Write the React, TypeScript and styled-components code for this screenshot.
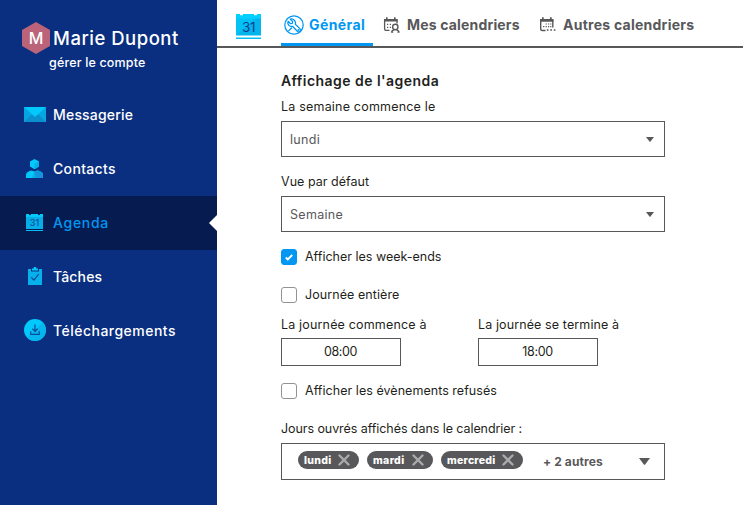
import React, { useState } from 'react';
import styled, { createGlobalStyle } from 'styled-components';

const GlobalStyle = createGlobalStyle`
  * { box-sizing: border-box; }
  body { margin: 0; background: #fff; font-family: Inter, "Noto Sans", sans-serif; color: #1f1f21; }
`;

const Layout = styled.div`
  display: flex;
  height: 505px;
  overflow: hidden;
`;

/* Sidebar */
const Sidebar = styled.aside`
  width: 217px;
  flex: none;
  background: #0a2f80;
  color: #fff;
`;

const Account = styled.header`
  height: 88px;
  padding: 22px 0 0 22px;
`;

const AccountRow = styled.div`
  display: flex;
  align-items: flex-start;
  height: 33px;
`;

const AccountName = styled.div`
  margin-left: 3px;
  font-size: 18.5px;
  font-weight: 450;
  line-height: 33px;
  letter-spacing: 0.5px;
  white-space: nowrap;
`;

const ManageLink = styled.a`
  display: block;
  margin: -2px 0 0 27px;
  font-size: 12.5px;
  font-weight: 500;
  line-height: 20px;
  letter-spacing: 0.16px;
`;

const NavItem = styled.a<{ $active?: boolean; $spacing: number }>`
  position: relative;
  display: flex;
  align-items: center;
  height: 54px;
  padding: 0 0 2px 24px;
  font-size: 14px;
  font-weight: 500;
  letter-spacing: ${p => p.$spacing}px;
  color: ${p => (p.$active ? '#0097f2' : '#fff')};
  background: ${p => (p.$active ? '#061c51' : 'transparent')};
  &::after {
    content: '';
    display: ${p => (p.$active ? 'block' : 'none')};
    position: absolute;
    right: 0;
    top: 19px;
    border: 8px solid transparent;
    border-right-color: #fff;
    border-left: 0;
  }
`;

const NavIcon = styled.span`
  display: flex;
  justify-content: center;
  width: 22px;
  margin-right: 7px;
  svg { display: block; }
`;

/* Main area */
const Main = styled.main`
  flex: 1;
`;

const TabBar = styled.nav`
  display: flex;
  height: 48px;
  padding-left: 18px;
  border-bottom: 2px solid #58585a;
`;

const AppIcon = styled.div`
  width: 46px;
  padding: 14px 0 0 1px;
  svg { display: block; }
`;

const Tab = styled.a<{ $active?: boolean; $spacing: number; $gap: number; $width: number }>`
  display: flex;
  align-items: center;
  gap: ${p => p.$gap}px;
  width: ${p => p.$width}px;
  height: 46px;
  padding: 6px 0 0 3px;
  border-bottom: 3px solid ${p => (p.$active ? '#0097f2' : 'transparent')};
  color: ${p => (p.$active ? '#0097f2' : '#58585a')};
  font-size: 14px;
  font-weight: 700;
  line-height: 20px;
  letter-spacing: ${p => p.$spacing}px;
  white-space: nowrap;
  svg { flex: none; }
`;

const TabIcon = styled.span`
  display: flex;
  margin-left: 7px;
  padding-top: 1px;
`;

const Form = styled.form`
  display: flex;
  flex-direction: column;
  width: 448px;
  padding: 23px 0 0 64px;
`;

const Title = styled.h1`
  margin: 0 0 5px;
  font-size: 14px;
  font-weight: 600;
  line-height: 20px;
  letter-spacing: 0.45px;
`;

const Label = styled.div<{ $spacing: number }>`
  height: 25px;
  font-size: 12.5px;
  line-height: 21px;
  letter-spacing: ${p => p.$spacing}px;
  white-space: nowrap;
`;

const Select = styled.div<{ $spacing: number }>`
  display: flex;
  align-items: center;
  justify-content: space-between;
  height: 36px;
  margin-bottom: 14px;
  padding: 0 10px 0 8px;
  border: 1px solid #58585a;
  color: #58585a;
  font-size: 12.5px;
  letter-spacing: ${p => p.$spacing}px;
`;

const CheckRow = styled.label<{ $mt: number; $mb: number; $spacing: number }>`
  display: flex;
  align-items: center;
  gap: 8px;
  height: 16px;
  margin: ${p => p.$mt}px 0 ${p => p.$mb}px;
  font-size: 12.5px;
  line-height: 16px;
  letter-spacing: ${p => p.$spacing}px;
`;

const Box = styled.span<{ $checked: boolean }>`
  display: flex;
  align-items: center;
  justify-content: center;
  width: 16px;
  height: 16px;
  border: 1px solid ${p => (p.$checked ? '#0097f2' : '#929293')};
  border-radius: 3px;
  background: ${p => (p.$checked ? '#0097f2' : '#fff')};
`;

const Times = styled.div`
  display: grid;
  grid-template-columns: 197px 1fr;
`;

const TimeLabel = styled(Label)`
  height: 24px;
`;

const TimeField = styled.div`
  width: 120px;
  height: 28px;
  padding-right: 1px;
  border: 1px solid #58585a;
  font-size: 12.5px;
  line-height: 26px;
  letter-spacing: -0.36px;
  text-align: center;
`;

const DaysField = styled.div`
  display: flex;
  align-items: center;
  height: 37px;
  padding: 0 14px 0 16px;
  border: 1px solid #58585a;
  color: #58585a;
`;

const Chip = styled.span<{ $width: number; $spacing: number }>`
  display: flex;
  align-items: center;
  justify-content: space-between;
  width: ${p => p.$width}px;
  height: 18px;
  margin: 0 8px 3px 0;
  padding: 0 9px 0 6px;
  border-radius: 9px;
  background: #58585a;
  color: #fff;
  font-size: 10.5px;
  font-weight: 800;
  letter-spacing: ${p => p.$spacing}px;
`;

const More = styled.span`
  flex: 1;
  margin-left: 12px;
  font-size: 12px;
  font-weight: 700;
  letter-spacing: 0.11px;
`;

const Hexagon = () => (
  <svg width="28" height="32" viewBox="0 0 28 32">
    <path d="M14 0 28 8v16l-14 8L0 24V8z" fill="#bb6379" />
    <text x="14" y="22" textAnchor="middle" fontFamily="Inter, sans-serif" fontSize="16" fontWeight="500" fill="#fff">M</text>
  </svg>
);

const MailIcon = () => (
  <svg width="22" height="15" viewBox="0 0 22 15">
    <path d="M0 0h22v15H0z" fill="#04a7e2" />
    <path d="M0 15 7.5 7.5h7L22 15z" fill="#0c8fce" />
    <path d="M0 0h22L11 10z" fill="#02c8fb" />
  </svg>
);

const ContactIcon = () => (
  <svg width="18" height="19" viewBox="0 0 18 19">
    <path d="m8.500 0 4.500 2.600v5L8.500 10.300 4 7.600v-5z" fill="#02c8fb" />
    <path d="M8.500 5 13 2.600v5L8.500 10.300z" fill="#06aee8" />
    <path d="M0 19v-2.600C0 13.200 3 12 5.500 11.500l3 1 3-1C14 12 17 13.200 17 16.400V19z" fill="#02c8fb" />
    <path d="m6 19 2.500-6.500 3-1C14 12 17 13.200 17 16.400V19z" fill="#06aee8" />
    <path d="M10 19 8.500 12.500l3-1C14 12 17 13.200 17 16.400V19z" fill="#1394dc" />
  </svg>
);

const NavCalendarIcon = () => (
  <svg width="18" height="17" viewBox="0 0 18 17">
    <path d="M0 0h3v1h2V0h7v1h2V0h3v15H0z" fill="#06aee8" />
    <path d="M0 0h3v1h2V0h7v1h2V0h3v3H0z" fill="#02c8fb" />
    <path d="M0 16h17v1H0z" fill="#02c0f5" />
    <text x="8.500" y="12" textAnchor="middle" fontFamily="Inter, sans-serif" fontSize="9" fontWeight="500" letterSpacing="0" fill="#0a4d9c">31</text>
  </svg>
);

const CalendarIcon = () => (
  <svg width="25" height="25" viewBox="0 0 25 25">
    <defs>
      <linearGradient id="page" x1="0" y1="0" x2="1" y2="1">
        <stop offset=".5" stopColor="#03c2f6" />
        <stop offset=".5" stopColor="#06b4ec" />
      </linearGradient>
    </defs>
    <path d="M0 0h4v1.500h3V0h11v1.500h3V0h4v21.500H0z" fill="url(#page)" />
    <path d="M0 0h4v1.500h3V0h11v1.500h3V0h4v4.500H0z" fill="#02d0ff" />
    <path d="M0 23.500h25V25H0z" fill="#02c0f5" />
    <text x="12.500" y="18" textAnchor="middle" fontFamily="Inter, sans-serif" fontSize="13.500" fontWeight="400" letterSpacing="-0.3" fill="#0a3f8f">31</text>
  </svg>
);

const TaskIcon = () => (
  <svg width="14" height="18" viewBox="0 0 14 18">
    <path d="M0 2h3v2.500h8V2h3v16H0z" fill="#06b0ea" />
    <path d="M4 3.500V1.500h1.800V0h2.400v1.500H10v2z" fill="#02c8fb" />
    <path d="m3.300 10.300 2.600 2.900L10.800 7" fill="none" stroke="#0a3f8f" strokeWidth="1.100" />
  </svg>
);

const DownloadIcon = () => (
  <svg width="22" height="22" viewBox="0 0 22 22">
    <circle cx="11" cy="11" r="11" fill="#02c8fb" />
    <path d="M18.800 3.200A11 11 0 0 1 3.200 18.800z" fill="#05b5ee" />
    <path d="M11 5.500v6.500M8.300 9.700l2.700 2.700 2.700-2.700M6.700 12.300v3h8.600v-3" fill="none" stroke="#0a4d9c" strokeWidth="1.300" />
  </svg>
);

const WrenchIcon = () => (
  <svg width="20" height="20" viewBox="0 0 20 20" fill="none" stroke="#0097f2" strokeWidth="1.250" strokeLinejoin="round">
    <circle cx="10" cy="10" r="9.200" />
    <path d="M6.300 4.200 8.700 6.500 8.300 8.300 6.500 8.700 4.200 6.300C3.500 8 3.900 9.500 5 10.500c1.200 1 2.400 1.200 3.600.8l4.900 5.200c1.800 1.400 4-.7 2.600-2.600l-4.800-4.700c.5-1.500.2-2.800-.9-3.900C9.200 4.100 7.800 3.700 6.300 4.200z" />
    <path d="M8 12.500l-3.600 3.600" />
    <circle cx="14.500" cy="15" r=".4" />
  </svg>
);

const MyCalendarsIcon = () => (
  <svg width="18" height="17" viewBox="0 0 18 17" fill="none" stroke="#58585a">
    <path d="M1.600 3v9q0 1.300 1.300 1.300H6.500M14 3v3.500" strokeWidth="1.300" />
    <path d="M1 2h13.700v2.500H1zM3 .3h1.600v2H3zM11 .3h1.600v2H11z" fill="#58585a" stroke="none" />
    <path d="M4 7.300h1.200M4 10.300h1.200M6.800 7.300H8M6.800 10.300H8" strokeWidth="1.200" />
    <circle cx="12.300" cy="10" r="2.700" strokeWidth="1.400" />
    <path d="M8.400 15.400c.2-1.300 1.200-2.200 2.700-2.500M16.200 15.400c-.2-1.300-1.200-2.200-2.700-2.500M8 15.100h2.200M14.400 15.100h2.200" strokeWidth="1.300" />
  </svg>
);

const OtherCalendarsIcon = () => (
  <svg width="18" height="17" viewBox="0 0 18 17" fill="none" stroke="#58585a">
    <path d="M1.700 3v9q0 1.500 1.500 1.500H6.500M13.800 3v7.500" strokeWidth="1.400" />
    <path d="M1 2h13.500v2.700H1zM3 .3h1.700v2H3zM11 .3h1.700v2H11z" fill="#58585a" stroke="none" />
    <path d="M6.600 7h1.200M9 7h1.200M11.200 7h1.200M4.100 9.700h1.200M6.600 9.700h1.200M9 9.700h1.200M11.200 9.700h1.200" strokeWidth="1.200" />
    <path d="M7.800 13h1.700M11.300 13H13M14.800 13h1.700" strokeWidth="1.700" />
  </svg>
);

const Arrow = ({ width, height }: { width: number; height: number }) => (
  <svg width={width} height={height} viewBox="0 0 10 6" preserveAspectRatio="none">
    <path d="M0 0h10L5.600 5.500Q5 6.200 4.400 5.500z" fill="#58585a" />
  </svg>
);

const Cross = () => (
  <svg width="12" height="12" viewBox="0 0 12 12">
    <path d="m1.500 1.500 9 9m0-9-9 9" stroke="#aaaaab" strokeWidth="2.400" strokeLinecap="round" />
  </svg>
);

const Check = () => (
  <svg width="8" height="7" viewBox="0 0 8 7">
    <path d="m.8 3.500 2 2L7.200 1" fill="none" stroke="#fff" strokeWidth="1.900" />
  </svg>
);

interface CheckboxProps { text: string; initial?: boolean; mt: number; mb: number; spacing: number }

const Checkbox = ({ text, initial = false, mt, mb, spacing }: CheckboxProps) => {
  const [checked, setChecked] = useState(initial);
  return (
    <CheckRow $mt={mt} $mb={mb} $spacing={spacing} onClick={() => setChecked(!checked)}>
      <Box $checked={checked}>{checked && <Check />}</Box>
      {text}
    </CheckRow>
  );
};

const navItems = [
  { text: 'Messagerie', icon: <MailIcon />, spacing: 0.19 },
  { text: 'Contacts', icon: <ContactIcon />, spacing: 0.33 },
  { text: 'Agenda', icon: <NavCalendarIcon />, spacing: 0.7, active: true },
  { text: 'Tâches', icon: <TaskIcon />, spacing: 0.14 },
  { text: 'Téléchargements', icon: <DownloadIcon />, spacing: 0.48 },
];

const days = [
  { text: 'lundi', width: 61, spacing: 0.3 },
  { text: 'mardi', width: 66, spacing: 0.36 },
  { text: 'mercredi', width: 82, spacing: 0.24 },
];

export default function App() {
  return (
    <Layout>
      <GlobalStyle />
      <Sidebar>
        <Account>
          <AccountRow>
            <Hexagon />
            <AccountName>Marie Dupont</AccountName>
          </AccountRow>
          <ManageLink>gérer le compte</ManageLink>
        </Account>
        {navItems.map(item => (
          <NavItem key={item.text} $active={item.active} $spacing={item.spacing}>
            <NavIcon>{item.icon}</NavIcon>
            {item.text}
          </NavItem>
        ))}
      </Sidebar>
      <Main>
        <TabBar>
          <AppIcon><CalendarIcon /></AppIcon>
          <Tab $active $spacing={0.4} $gap={5} $width={92}><WrenchIcon />Général</Tab>
          <Tab $spacing={0.17} $gap={6} $width={156}>
            <TabIcon><MyCalendarsIcon /></TabIcon>Mes calendriers
          </Tab>
          <Tab $spacing={0.25} $gap={6} $width={160}>
            <TabIcon><OtherCalendarsIcon /></TabIcon>Autres calendriers
          </Tab>
        </TabBar>
        <Form>
          <Title>Affichage de l'agenda</Title>
          <Label $spacing={0.2}>La semaine commence le</Label>
          <Select $spacing={0.3}>lundi<Arrow width={8} height={5} /></Select>
          <Label $spacing={0.03}>Vue par défaut</Label>
          <Select $spacing={0.3}>Semaine<Arrow width={8} height={5} /></Select>
          <Checkbox text="Afficher les week-ends" initial mt={3} mb={22} spacing={0} />
          <Checkbox text="Journée entière" mt={0} mb={11} spacing={0.07} />
          <Times>
            <div>
              <TimeLabel $spacing={0.17}>La journée commence à</TimeLabel>
              <TimeField>08:00</TimeField>
            </div>
            <div>
              <TimeLabel $spacing={0.11}>La journée se termine à</TimeLabel>
              <TimeField>18:00</TimeField>
            </div>
          </Times>
          <Checkbox text="Afficher les évènements refusés" mt={17} mb={19} spacing={0.04} />
          <Label $spacing={-0.07}>Jours ouvrés affichés dans le calendrier :</Label>
          <DaysField>
            {days.map(day => (
              <Chip key={day.text} $width={day.width} $spacing={day.spacing}>{day.text}<Cross /></Chip>
            ))}
            <More>+ 2 autres</More>
            <Arrow width={11} height={7} />
          </DaysField>
        </Form>
      </Main>
    </Layout>
  );
}
